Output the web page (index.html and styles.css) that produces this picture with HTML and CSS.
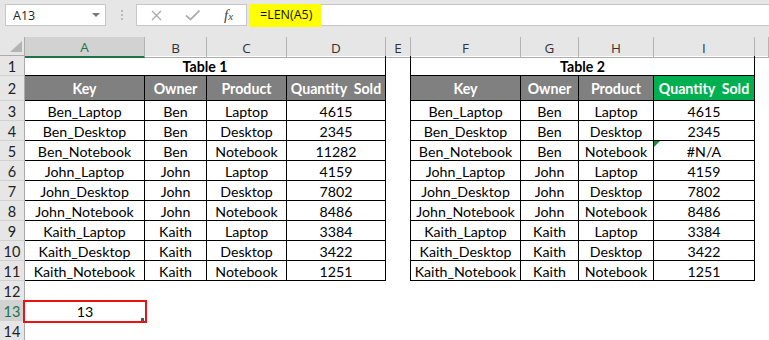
FILE: index.html
```html
<!DOCTYPE html>
<html>
<head>
<meta charset="utf-8">
<link rel="stylesheet" href="styles.css">
</head>
<body>
<div class="app">
  <div class="fbar">
    <div class="namebox"><span class="nb-text">A13</span><span class="caret"></span></div>
    <div class="grip"><i></i><i></i><i></i></div>
    <div class="fxbox">
      <svg class="ic-x" width="11" height="11" viewBox="0 0 11 11"><path d="M1 1 L10 10 M10 1 L1 10" stroke="#a8a8a8" stroke-width="1.3" fill="none"/></svg>
      <svg class="ic-ok" width="16" height="12" viewBox="0 0 16 12"><path d="M1 6.5 L5.5 10.5 L14.5 1.5" stroke="#b0b0b0" stroke-width="1.8" fill="none"/></svg>
      <span class="fx">f<small>x</small></span>
    </div>
    <div class="formula">
      <div class="hl">=LEN(A5)</div>
      <div class="rest"></div>
    </div>
  </div>

  <div class="sheet">
    <div class="row hdr">
      <div class="corner"><svg width="25" height="19" viewBox="0 0 25 19"><path d="M10 15 L22 15 L22 4 Z" fill="#b4b4b4"/></svg></div>
      <div class="ch sel">A</div><div class="ch">B</div><div class="ch">C</div><div class="ch">D</div><div class="ch">E</div><div class="ch">F</div><div class="ch">G</div><div class="ch">H</div><div class="ch">I</div><div class="ch"></div>
    </div>
    <div class="row">
      <div class="rh">1</div>
      <div class="c title t1">Table 1</div>
      <div class="c gap"></div>
      <div class="c title t2">Table 2</div>
      <div class="c"></div>
    </div>
    <div class="row r2">
      <div class="rh">2</div>
      <div class="c th">Key</div><div class="c th">Owner</div><div class="c th">Product</div><div class="c th">Quantity&nbsp; Sold</div>
      <div class="c gap"></div>
      <div class="c th">Key</div><div class="c th">Owner</div><div class="c th">Product</div><div class="c th green">Quantity&nbsp; Sold</div>
      <div class="c"></div>
    </div>
    <div class="row">
      <div class="rh">3</div>
      <div class="c td">Ben_Laptop</div><div class="c td">Ben</div><div class="c td">Laptop</div><div class="c td">4615</div>
      <div class="c gap"></div>
      <div class="c td">Ben_Laptop</div><div class="c td">Ben</div><div class="c td">Laptop</div><div class="c td">4615</div>
      <div class="c"></div>
    </div>
    <div class="row">
      <div class="rh">4</div>
      <div class="c td">Ben_Desktop</div><div class="c td">Ben</div><div class="c td">Desktop</div><div class="c td">2345</div>
      <div class="c gap"></div>
      <div class="c td">Ben_Desktop</div><div class="c td">Ben</div><div class="c td">Desktop</div><div class="c td">2345</div>
      <div class="c"></div>
    </div>
    <div class="row">
      <div class="rh">5</div>
      <div class="c td">Ben_Notebook</div><div class="c td">Ben</div><div class="c td">Notebook</div><div class="c td">11282</div>
      <div class="c gap"></div>
      <div class="c td">Ben_Notebook</div><div class="c td">Ben</div><div class="c td">Notebook</div><div class="c td err">#N/A</div>
      <div class="c"></div>
    </div>
    <div class="row">
      <div class="rh">6</div>
      <div class="c td">John_Laptop</div><div class="c td">John</div><div class="c td">Laptop</div><div class="c td">4159</div>
      <div class="c gap"></div>
      <div class="c td">John_Laptop</div><div class="c td">John</div><div class="c td">Laptop</div><div class="c td">4159</div>
      <div class="c"></div>
    </div>
    <div class="row">
      <div class="rh">7</div>
      <div class="c td">John_Desktop</div><div class="c td">John</div><div class="c td">Desktop</div><div class="c td">7802</div>
      <div class="c gap"></div>
      <div class="c td">John_Desktop</div><div class="c td">John</div><div class="c td">Desktop</div><div class="c td">7802</div>
      <div class="c"></div>
    </div>
    <div class="row">
      <div class="rh">8</div>
      <div class="c td">John_Notebook</div><div class="c td">John</div><div class="c td">Notebook</div><div class="c td">8486</div>
      <div class="c gap"></div>
      <div class="c td">John_Notebook</div><div class="c td">John</div><div class="c td">Notebook</div><div class="c td">8486</div>
      <div class="c"></div>
    </div>
    <div class="row">
      <div class="rh">9</div>
      <div class="c td">Kaith_Laptop</div><div class="c td">Kaith</div><div class="c td">Laptop</div><div class="c td">3384</div>
      <div class="c gap"></div>
      <div class="c td">Kaith_Laptop</div><div class="c td">Kaith</div><div class="c td">Laptop</div><div class="c td">3384</div>
      <div class="c"></div>
    </div>
    <div class="row">
      <div class="rh">10</div>
      <div class="c td">Kaith_Desktop</div><div class="c td">Kaith</div><div class="c td">Desktop</div><div class="c td">3422</div>
      <div class="c gap"></div>
      <div class="c td">Kaith_Desktop</div><div class="c td">Kaith</div><div class="c td">Desktop</div><div class="c td">3422</div>
      <div class="c"></div>
    </div>
    <div class="row">
      <div class="rh">11</div>
      <div class="c td">Kaith_Notebook</div><div class="c td">Kaith</div><div class="c td">Notebook</div><div class="c td">1251</div>
      <div class="c gap"></div>
      <div class="c td">Kaith_Notebook</div><div class="c td">Kaith</div><div class="c td">Notebook</div><div class="c td">1251</div>
      <div class="c"></div>
    </div>
    <div class="row">
      <div class="rh">12</div>
    </div>
    <div class="row">
      <div class="rh sel">13</div>
      <div class="c active">13</div>
    </div>
    <div class="row">
      <div class="rh">14</div>
    </div>
  </div>
</div>
</body>
</html>
```

FILE: styles.css
```css
html, body {
  margin: 0;
  padding: 0;
  background: #ffffff;
  overflow: hidden;
}

.app {
  width: 769px;
  height: 340px;
  overflow: hidden;
  font-family: "Lato", "Liberation Sans", sans-serif;
  color: #000;
}

/* formula bar */
.fbar {
  height: 37px;
  box-sizing: border-box;
  background: #e6e6e6;
  display: flex;
  align-items: flex-start;
  padding: 4px 0 0 5px;
}

.namebox {
  width: 101px;
  height: 22px;
  box-sizing: border-box;
  border: 1px solid #c6c6c6;
  background: #fff;
  display: flex;
  align-items: center;
  padding: 0 5px 0 7px;
  font: 12.5px "Open Sans", sans-serif;
  color: #222;
}

.caret {
  margin-left: auto;
  width: 0;
  height: 0;
  border-left: 4px solid transparent;
  border-right: 4px solid transparent;
  border-top: 4px solid #777;
}

.grip {
  display: flex;
  flex-direction: column;
  gap: 2px;
  margin: 6px 13px 0 15px;
}

.grip i {
  display: block;
  width: 2px;
  height: 2px;
  background: #b8b8b8;
}

.fxbox {
  width: 111px;
  height: 22px;
  box-sizing: border-box;
  border: 1px solid #c6c6c6;
  background: #fff;
  display: flex;
  align-items: center;
  padding-left: 14px;
}

.ic-ok {
  margin-left: 23px;
}

.fx {
  margin-left: 23px;
  font: italic 15px "Liberation Serif", serif;
  color: #444;
}

.fx small {
  font-size: 11px;
}

.formula {
  flex: 1;
  display: flex;
  align-items: flex-start;
  margin-left: 2px;
}

.hl {
  width: 72px;
  height: 23px;
  box-sizing: border-box;
  background: #ffff00;
  padding-left: 11px;
  font: 12.5px "Open Sans", sans-serif;
  line-height: 22px;
  color: #111;
}

.rest {
  flex: 1;
  height: 22px;
  box-sizing: border-box;
  background: #fff;
  border-top: 1px solid #c6c6c6;
  border-bottom: 1px solid #c6c6c6;
}

/* sheet */
.row {
  display: grid;
  grid-template-columns: 25px 120px 62px 80px 99px 25px 110px 58px 75px 101px 1fr;
  height: 20px;
}

.row.r2 {
  height: 25px;
}

.row.hdr {
  height: 19px;
  background: #e6e6e6;
}

.corner {
  box-sizing: border-box;
  border-right: 1px solid #ababab;
  border-bottom: 1px solid #ababab;
  height: 19px;
}

.corner svg {
  display: block;
}

.ch {
  box-sizing: border-box;
  border-right: 1px solid #b4b4b4;
  border-bottom: 1px solid #ababab;
  display: flex;
  align-items: center;
  justify-content: center;
  font: 13.5px "Open Sans", sans-serif;
  color: #333;
  padding-top: 1px;
}

.ch.sel {
  background: #d2d2d2;
  color: #217346;
  border-bottom: 2px solid #217346;
}

.rh {
  grid-column: 1;
  box-sizing: border-box;
  background: #e6e6e6;
  border-right: 1px solid #ababab;
  border-bottom: 1px solid #d0d0d0;
  display: flex;
  align-items: center;
  justify-content: center;
  font-size: 14.5px;
  color: #222;
  padding-top: 1px;
}

.rh.sel {
  background: #d2d2d2;
  color: #217346;
}

.c {
  box-sizing: border-box;
  display: flex;
  align-items: center;
  justify-content: center;
  white-space: nowrap;
  overflow: hidden;
  font-size: 14.2px;
  padding-top: 1px;
}

.title {
  grid-column: span 4;
  font-weight: 700;
  border-right: 1px solid #000;
  border-bottom: 1px solid #000;
}

.gap {
  border-right: 1px solid #000;
}

.th {
  background: #808080;
  color: #fff;
  font-weight: 700;
  border-right: 1px solid #000;
  border-bottom: 1px solid #000;
}

.th.green {
  background: #00b050;
}

.td {
  border-right: 1px solid #000;
  border-bottom: 1px solid #000;
}

.err {
  position: relative;
}

.err::before {
  content: "";
  position: absolute;
  left: 0;
  top: 0;
  border-top: 6px solid #1e8a3a;
  border-right: 6px solid transparent;
}

.active {
  grid-column: 2;
  position: relative;
  overflow: visible;
}

.active::after {
  content: "";
  position: absolute;
  left: -2px;
  right: -2px;
  top: -1px;
  bottom: -2px;
  border: 2px solid #ee1111;
}

.active::before {
  content: "";
  position: absolute;
  right: 1px;
  bottom: 0;
  width: 3px;
  height: 3px;
  background: #217346;
}
```
